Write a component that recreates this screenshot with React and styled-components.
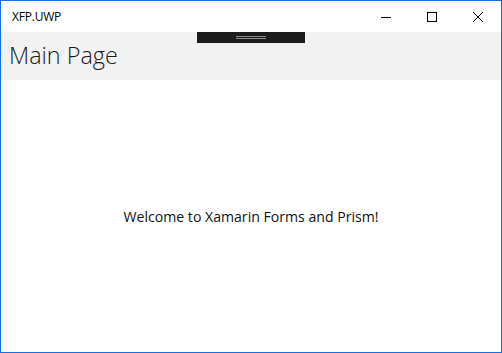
import React from "react";
import styled, { createGlobalStyle } from "styled-components";

const GlobalStyle = createGlobalStyle`
  html, body {
    margin: 0;
    padding: 0;
    background: #ffffff;
  }
`;

const Window = styled.div`
  box-sizing: border-box;
  width: 502px;
  height: 353px;
  border: 1px solid #1a6fe0;
  display: flex;
  flex-direction: column;
  background: #ffffff;
  font-family: "Open Sans", "Noto Sans", sans-serif;
  color: #000;
`;

const TitleBar = styled.div`
  height: 31px;
  display: flex;
  align-items: center;
  justify-content: space-between;
  flex-shrink: 0;
`;

const Title = styled.span`
  font-size: 12px;
  padding-left: 11px;
  padding-bottom: 1px;
  letter-spacing: -0.2px;
`;

const Controls = styled.div`
  display: flex;
  height: 100%;
`;

const ControlButton = styled.div`
  width: 46px;
  height: 100%;
  display: flex;
  align-items: center;
  justify-content: center;
`;

const Header = styled.div`
  position: relative;
  height: 48px;
  flex-shrink: 0;
  background: #f2f2f2;
  display: flex;
  align-items: center;
`;

const PageTitle = styled.h1`
  margin: 0;
  padding-left: 8px;
  padding-bottom: 2px;
  font-size: 23.4px;
  font-weight: 300;
  color: #1a1a1a;
`;

const DragHandle = styled.div`
  position: absolute;
  top: 0;
  left: 196px;
  width: 108px;
  height: 11px;
  background: #1c1c1c;
  display: flex;
  flex-direction: column;
  align-items: center;
  justify-content: center;
  gap: 1px;
`;

const HandleLine = styled.div`
  width: 30px;
  height: 1px;
  background: #8a8a8a;
`;

const Content = styled.div`
  flex: 1;
  display: flex;
  align-items: center;
  justify-content: center;
`;

const Welcome = styled.p`
  margin: 0;
  font-size: 14.1px;
  color: #111;
`;

export default function App() {
  return (
    <>
      <GlobalStyle />
      <Window>
        <TitleBar>
          <Title>XFP.UWP</Title>
          <Controls>
            <ControlButton>
              <svg width="10" height="10" viewBox="0 0 10 10">
                <path d="M0 5.5H10" stroke="#000" strokeWidth="1" />
              </svg>
            </ControlButton>
            <ControlButton>
              <svg width="10" height="10" viewBox="0 0 10 10">
                <rect x="0.5" y="0.5" width="9" height="9" fill="none" stroke="#000" strokeWidth="1" />
              </svg>
            </ControlButton>
            <ControlButton>
              <svg width="10" height="10" viewBox="0 0 10 10">
                <path d="M0 0L10 10M10 0L0 10" stroke="#000" strokeWidth="1" />
              </svg>
            </ControlButton>
          </Controls>
        </TitleBar>
        <Header>
          <PageTitle>Main Page</PageTitle>
          <DragHandle>
            <HandleLine />
            <HandleLine />
          </DragHandle>
        </Header>
        <Content>
          <Welcome>Welcome to Xamarin Forms and Prism!</Welcome>
        </Content>
      </Window>
    </>
  );
}
